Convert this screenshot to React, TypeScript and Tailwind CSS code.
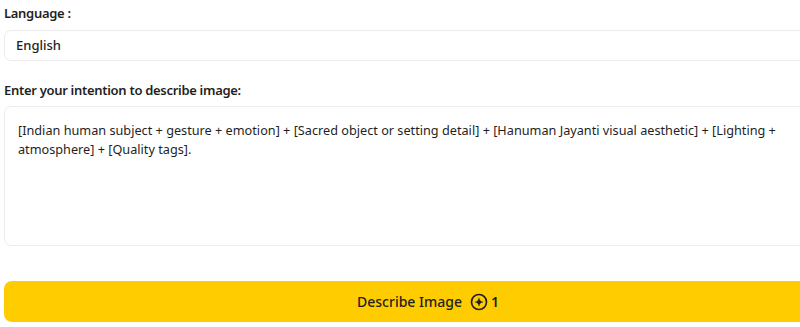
import React from "react";

function SparkCircle() {
  return (
    <svg width="18" height="18" viewBox="0 0 24 24" fill="none" stroke="currentColor" strokeWidth="2.2">
      <circle cx="12" cy="12" r="10" />
      <path d="M12 6.5c.5 3 2.5 5 5.5 5.5-3 .5-5 2.5-5.5 5.5-.5-3-2.5-5-5.5-5.5 3-.5 5-2.5 5.5-5.5z" fill="currentColor" strokeWidth="0.5" />
    </svg>
  );
}

export default function App() {
  return (
    <div className="w-[800px] h-[327px] overflow-hidden bg-white text-[#1f1f1f]" style={{ fontFamily: '"Noto Sans", sans-serif' }}>
      <div className="w-[848px] ml-[4px] flex flex-col">
        {/* Language */}
        <label className="mt-[4px] text-[13px] font-semibold tracking-[-0.3px] leading-[18px]">Language :</label>
        <div className="mt-[8px] h-[31px] flex items-center px-[11px] border border-[#ececec] rounded-[7px] text-[13px] font-medium">
          English
        </div>

        {/* Intention */}
        <label className="mt-[20px] text-[13px] font-semibold tracking-[-0.3px] leading-[18px]">Enter your intention to describe image:</label>
        <div className="mt-[7px] h-[140px] border border-[#ececec] rounded-[7px] pl-[13px] pr-[60px] pt-[14px] text-[12.7px] leading-[19px]">
          [Indian human subject + gesture + emotion] + [Sacred object or setting detail] + [Hanuman Jayanti visual aesthetic] + [Lighting + atmosphere] + [Quality tags].
        </div>

        {/* Action */}
        <button className="mt-[35px] h-[41px] w-full rounded-[8px] bg-[#ffcc00] flex items-center justify-center gap-[8px] text-[14px] font-medium">
          <span>Describe Image</span>
          <span className="flex items-center gap-[3px]">
            <SparkCircle />
            <span className="font-semibold">1</span>
          </span>
        </button>
      </div>
    </div>
  );
}
